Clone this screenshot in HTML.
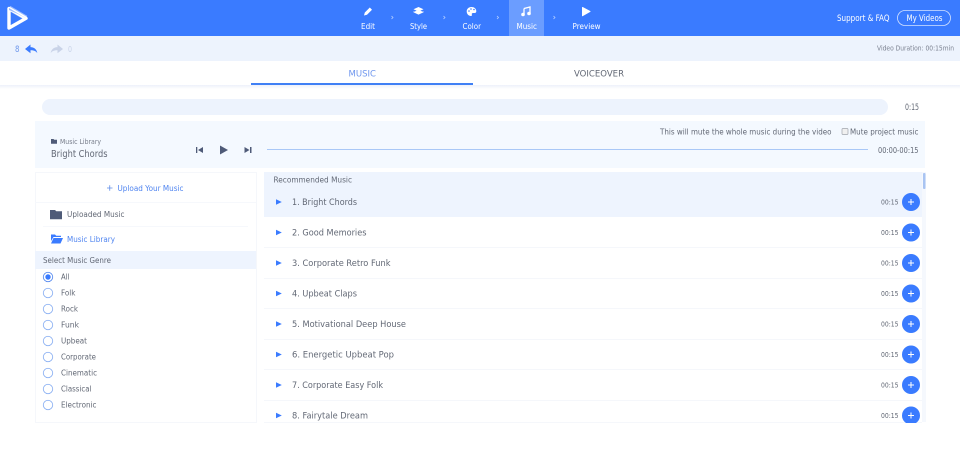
<!DOCTYPE html>
<html><head><meta charset="utf-8"><style>
html,body{margin:0;padding:0;background:#fff;width:960px;height:468px;overflow:hidden}
svg{display:block}
text{font-family:"DejaVu Sans","Liberation Sans",sans-serif;fill:#626875;font-size:8px}
.w{fill:#fff}.b{fill:#4f84f0}
</style></head><body>
<svg width="960" height="468" viewBox="0 0 960 468" xmlns="http://www.w3.org/2000/svg">
<defs><linearGradient id="sh" x1="0" y1="0" x2="0" y2="1"><stop offset="0" stop-color="#edf1fa"/><stop offset="1" stop-color="#fff"/></linearGradient></defs>
<rect width="960" height="36" fill="#3a7bff"/>
<rect y="36" width="960" height="25" fill="#edf3fd"/>
<rect y="85" width="960" height="4" fill="url(#sh)"/>
<rect x="251" y="83" width="222" height="2" fill="#4080f5"/>
<!-- logo -->
<path d="M9 8 L26 18" stroke="#9dbdff" stroke-width="5" fill="none"/>
<path d="M9 8.500 V28 L26 18.300 Z" fill="none" stroke="#fff" stroke-width="3.400" stroke-linejoin="round"/>
<path d="M9 8 L26 18.300 L18 14 L9 10Z" fill="#9dbdff"/>
<!-- nav -->
<rect x="509" width="35" height="36" fill="#6b9dff"/>
<path d="M364 15.500l.8-3 5-5 2.200 2.200-5 5z" fill="#fff"/>
<path d="M418.500 7l5 2.300-5 2.300-5-2.300z M413.500 11.300l5 2.300 5-2.300v1l-5 2.300-5-2.300z" fill="#fff"/>
<path d="M418.500 9.800l5 2.300-5 2.300-5-2.300z" fill="#fff"/>
<path d="M471.500 7c-3 0-4.800 2-4.800 4.500s2 4.500 4.300 4.500c1.200 0 1-1 .8-1.600-.2-.9.400-1.400 1.300-1.400h1.500c1 0 1.700-.7 1.700-1.800 0-2.500-2.200-4.200-4.800-4.200z" fill="#fff"/>
<circle cx="469" cy="11" r=".8" fill="#3a7bff"/><circle cx="471" cy="9" r=".8" fill="#3a7bff"/><circle cx="474" cy="9.500" r=".8" fill="#3a7bff"/>
<path d="M524 8.500l6-1.500v6.500" stroke="#fff" stroke-width="1.300" fill="none"/><path d="M524 8.500v6" stroke="#fff" stroke-width="1.300"/>
<circle cx="523" cy="14.500" r="1.800" fill="#fff"/><circle cx="529" cy="13.500" r="1.800" fill="#fff"/>
<path d="M582.500 7.500l7.500 4-7.500 4.200z" fill="#fff" stroke="#fff" stroke-linejoin="round"/>
<g stroke="#b5cfff" stroke-width=".8" fill="none"><path d="M391.500 16l1.500 1.500-1.500 1.500"/><path d="M443.500 16l1.500 1.500-1.500 1.500"/><path d="M497 16l1.500 1.500-1.500 1.500"/><path d="M553.500 16l1.500 1.500-1.500 1.500"/></g>
<text class="w" x="361" y="29" textLength="14" lengthAdjust="spacingAndGlyphs" font-size="7.500">Edit</text>
<text class="w" x="410" y="29" textLength="17" lengthAdjust="spacingAndGlyphs">Style</text>
<text class="w" x="462.500" y="29" textLength="18.500" lengthAdjust="spacingAndGlyphs">Color</text>
<text class="w" x="516.500" y="29" textLength="20.500" lengthAdjust="spacingAndGlyphs">Music</text>
<text class="w" x="572.500" y="29" textLength="28" lengthAdjust="spacingAndGlyphs">Preview</text>
<text class="w" x="837" y="21" style="font-size:8.400px" textLength="52.500" lengthAdjust="spacingAndGlyphs">Support &amp; FAQ</text>
<rect x="897.500" y="10.500" width="53" height="15" rx="7.500" fill="none" stroke="#d5e3ff" stroke-width=".8"/>
<text class="w" x="906.500" y="21" style="font-size:8.400px" textLength="36" lengthAdjust="spacingAndGlyphs">My Videos</text>
<!-- sub bar -->
<text x="15" y="52" style="fill:#6f98ec;font-size:8.500px" textLength="4.500" lengthAdjust="spacingAndGlyphs">8</text>
<path d="M25 49l5.500-4.500v2.600c4 .2 6.300 2.400 6.800 6-1.500-2-3.500-2.800-6.800-2.800v3z" fill="#3a7bff"/>
<path d="M63 49l-5.500-4.500v2.600c-4 .2-6.300 2.400-6.800 6 1.500-2 3.500-2.800 6.800-2.800v3z" fill="#c9d3e8"/>
<text x="68" y="52" style="fill:#c9d3e8" textLength="4" lengthAdjust="spacingAndGlyphs">0</text>
<text x="877" y="50.500" style="font-size:6.800px;fill:#7b8190" textLength="77" lengthAdjust="spacingAndGlyphs">Video Duration: 00:15min</text>
<!-- tabs -->
<text x="348.500" y="76.500" style="fill:#6e96ee;font-size:8.800px" textLength="27.500" lengthAdjust="spacingAndGlyphs">MUSIC</text>
<text x="574" y="76.500" style="font-size:8.800px" textLength="50" lengthAdjust="spacingAndGlyphs">VOICEOVER</text>
<!-- progress -->
<rect x="42" y="99" width="846" height="16" rx="8" fill="#edf3fd"/>
<text x="905" y="110" style="font-size:8.800px" textLength="14" lengthAdjust="spacingAndGlyphs">0:15</text>
<!-- player -->
<rect x="35" y="121" width="890" height="47" fill="#f4f9ff"/>
<path d="M51 139h2.500l.8 .8H57v4h-6z" fill="#4f5b78"/>
<text x="60" y="144.200" style="font-size:6.800px;fill:#777d8a" textLength="41" lengthAdjust="spacingAndGlyphs">Music Library</text>
<text x="51" y="157" style="font-size:9.300px" textLength="56.500" lengthAdjust="spacingAndGlyphs">Bright Chords</text>
<path d="M196 147h1.300v6H196z M203 147v6l-5-3z" fill="#4f5b78"/>
<path d="M220 145.500l8 4.500-8 4.500z" fill="#4f5b78"/>
<path d="M244.500 147l5 3-5 3z M250 147h1.500v6H250z" fill="#4f5b78"/>
<rect x="267" y="149" width="601" height="1" fill="#a9c8f7"/>
<text x="878" y="153" style="font-size:7.800px" textLength="40.500" lengthAdjust="spacingAndGlyphs">00:00-00:15</text>
<text x="660" y="134.500" style="font-size:7.800px" textLength="171.500" lengthAdjust="spacingAndGlyphs">This will mute the whole music during the video</text>
<rect x="842" y="128.500" width="6" height="6" rx="1" fill="#f0f0f0" stroke="#a0a4ac" stroke-width=".7"/>
<text x="850" y="134.500" style="font-size:7.800px" textLength="68.500" lengthAdjust="spacingAndGlyphs">Mute project music</text>
<!-- left panel -->
<rect x="35.500" y="172.500" width="221" height="250" fill="#fff" stroke="#f5f7fb"/>
<path d="M107 188h5.500M109.750 185.300v5.500" stroke="#5f8ce8" stroke-width=".8" fill="none"/>
<text class="b" x="117.500" y="191" style="font-size:8.300px" textLength="66" lengthAdjust="spacingAndGlyphs">Upload Your Music</text>
<rect x="35" y="202" width="221" height="1" fill="#f6f8fc"/>
<path d="M50 210h5l1.300 1.300H62v8H50z" fill="#4f5b78"/>
<text x="67" y="217" style="font-size:8.300px" textLength="57.500" lengthAdjust="spacingAndGlyphs">Uploaded Music</text>
<rect x="43" y="226" width="205" height="1" fill="#f6f8fc"/>
<path d="M51 234.500h4l1.200 1.200h4.800v1.300h-7.500L51 241z" fill="#3a7bff"/><path d="M53.500 238h9.500l-2.500 5.500H51z" fill="#3a7bff"/>
<text class="b" x="67" y="242" style="font-size:8.300px" textLength="48" lengthAdjust="spacingAndGlyphs">Music Library</text>
<rect x="35" y="251" width="221" height="18" fill="#eef4fe"/>
<text x="43" y="262.800" style="font-size:7.800px" textLength="68" lengthAdjust="spacingAndGlyphs">Select Music Genre</text>
<g fill="#fff" stroke="#8fb3f3" stroke-width=".9">
<circle cx="48" cy="277" r="4.700" stroke="#5a8df0"/><circle cx="48" cy="293" r="4.700"/><circle cx="48" cy="309" r="4.700"/><circle cx="48" cy="325" r="4.700"/><circle cx="48" cy="341" r="4.700"/><circle cx="48" cy="357" r="4.700"/><circle cx="48" cy="373" r="4.700"/><circle cx="48" cy="389" r="4.700"/><circle cx="48" cy="405" r="4.700"/></g>
<circle cx="48" cy="277" r="2.700" fill="#3a7bff"/>
<text x="61" y="279.700" style="font-size:7.800px" textLength="8.500" lengthAdjust="spacingAndGlyphs">All</text>
<text x="61" y="295.700" style="font-size:7.800px" textLength="14.500" lengthAdjust="spacingAndGlyphs">Folk</text>
<text x="61" y="311.700" style="font-size:7.800px" textLength="17" lengthAdjust="spacingAndGlyphs">Rock</text>
<text x="61" y="327.700" style="font-size:7.800px" textLength="18" lengthAdjust="spacingAndGlyphs">Funk</text>
<text x="61" y="343.700" style="font-size:7.800px" textLength="26" lengthAdjust="spacingAndGlyphs">Upbeat</text>
<text x="61" y="359.700" style="font-size:7.800px" textLength="35" lengthAdjust="spacingAndGlyphs">Corporate</text>
<text x="61" y="375.700" style="font-size:7.800px" textLength="36" lengthAdjust="spacingAndGlyphs">Cinematic</text>
<text x="61" y="391.700" style="font-size:7.800px" textLength="30.500" lengthAdjust="spacingAndGlyphs">Classical</text>
<text x="61" y="407.700" style="font-size:7.800px" textLength="35.500" lengthAdjust="spacingAndGlyphs">Electronic</text>
<!-- right panel -->
<rect x="264" y="172" width="658" height="45" fill="#eef4fe"/>
<rect x="922" y="172" width="4" height="250" fill="#f5f8fd"/>
<rect x="923" y="173" width="2.500" height="16" rx="1" fill="#a9c4f2"/>
<text x="273.500" y="182.700" style="font-size:7.500px" textLength="78.500" lengthAdjust="spacingAndGlyphs">Recommended Music</text>
<g fill="#f5f7fb">
<rect x="264" y="247" width="658" height="1"/><rect x="264" y="278" width="658" height="1"/><rect x="264" y="308" width="658" height="1"/><rect x="264" y="339" width="658" height="1"/><rect x="264" y="369" width="658" height="1"/><rect x="264" y="400" width="658" height="1"/><rect x="264" y="422" width="658" height="1"/>
</g>
<g fill="#3a7bff">
<path d="M276 199.300l5.800 2.700-5.800 2.700z"/><path d="M276 229.800l5.800 2.700-5.800 2.700z"/><path d="M276 260.300l5.800 2.700-5.800 2.700z"/><path d="M276 290.800l5.800 2.700-5.800 2.700z"/><path d="M276 321.300l5.800 2.700-5.800 2.700z"/><path d="M276 351.800l5.800 2.700-5.800 2.700z"/><path d="M276 382.300l5.800 2.700-5.800 2.700z"/><path d="M276 412.800l5.800 2.700-5.800 2.700z"/>
<circle cx="911" cy="202" r="9"/><circle cx="911" cy="232.500" r="9"/><circle cx="911" cy="263" r="9"/><circle cx="911" cy="293.500" r="9"/><circle cx="911" cy="324" r="9"/><circle cx="911" cy="354.500" r="9"/><circle cx="911" cy="385" r="9"/><circle cx="911" cy="415.500" r="9"/>
</g>
<g stroke="#fff" stroke-width="1" fill="none">
<path d="M908 202h6M911 199v6"/><path d="M908 232.500h6M911 229.500v6"/><path d="M908 263h6M911 260v6"/><path d="M908 293.500h6M911 290.500v6"/><path d="M908 324h6M911 321v6"/><path d="M908 354.500h6M911 351.500v6"/><path d="M908 385h6M911 382v6"/><path d="M908 415.500h6M911 412.500v6"/>
</g>
<rect x="264" y="423" width="696" height="45" fill="#fff"/>
<text x="292" y="205" style="font-size:9px" textLength="65" lengthAdjust="spacingAndGlyphs">1. Bright Chords</text>
<text x="292" y="235.500" style="font-size:9px" textLength="74.500" lengthAdjust="spacingAndGlyphs">2. Good Memories</text>
<text x="292" y="266" style="font-size:9px" textLength="98.500" lengthAdjust="spacingAndGlyphs">3. Corporate Retro Funk</text>
<text x="292" y="296.500" style="font-size:9px" textLength="65" lengthAdjust="spacingAndGlyphs">4. Upbeat Claps</text>
<text x="292" y="327" style="font-size:9px" textLength="114" lengthAdjust="spacingAndGlyphs">5. Motivational Deep House</text>
<text x="292" y="357.500" style="font-size:9px" textLength="102" lengthAdjust="spacingAndGlyphs">6. Energetic Upbeat Pop</text>
<text x="292" y="388" style="font-size:9px" textLength="91" lengthAdjust="spacingAndGlyphs">7. Corporate Easy Folk</text>
<text x="292" y="418.500" style="font-size:9px" textLength="76" lengthAdjust="spacingAndGlyphs">8. Fairytale Dream</text>
<text x="881" y="204.500" style="font-size:7.300px" textLength="17.500" lengthAdjust="spacingAndGlyphs">00:15</text>
<text x="881" y="235" style="font-size:7.300px" textLength="17.500" lengthAdjust="spacingAndGlyphs">00:15</text>
<text x="881" y="265.500" style="font-size:7.300px" textLength="17.500" lengthAdjust="spacingAndGlyphs">00:15</text>
<text x="881" y="296" style="font-size:7.300px" textLength="17.500" lengthAdjust="spacingAndGlyphs">00:15</text>
<text x="881" y="326.500" style="font-size:7.300px" textLength="17.500" lengthAdjust="spacingAndGlyphs">00:15</text>
<text x="881" y="357" style="font-size:7.300px" textLength="17.500" lengthAdjust="spacingAndGlyphs">00:15</text>
<text x="881" y="387.500" style="font-size:7.300px" textLength="17.500" lengthAdjust="spacingAndGlyphs">00:15</text>
<text x="881" y="418" style="font-size:7.300px" textLength="17.500" lengthAdjust="spacingAndGlyphs">00:15</text>
</svg>
</body></html>
